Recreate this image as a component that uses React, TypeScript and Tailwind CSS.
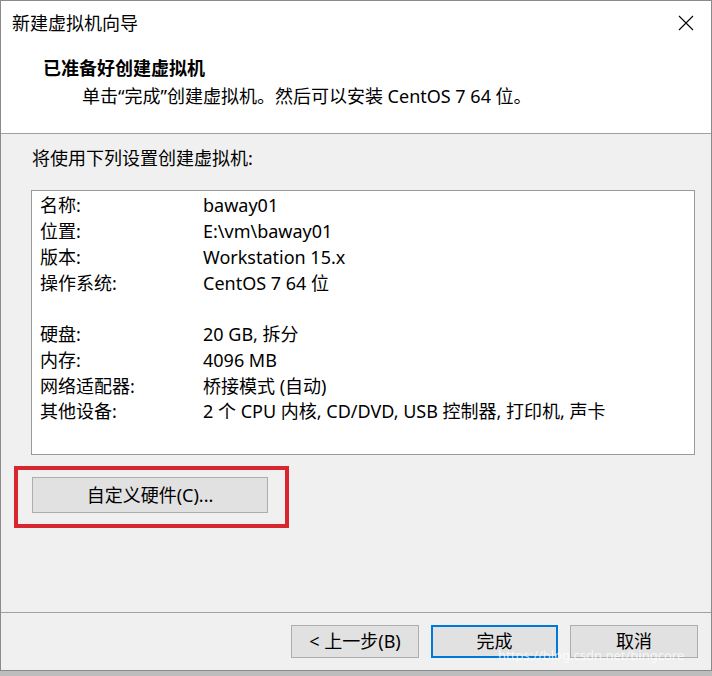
import React from "react";

const font = "font-['Noto_Sans','Noto_Sans_CJK_SC',sans-serif]";

// Summary rows; null marks the blank spacer row between OS and hardware.
const ROWS: ([string, string] | null)[] = [
  ["名称:", "baway01"],
  ["位置:", "E:\\vm\\baway01"],
  ["版本:", "Workstation 15.x"],
  ["操作系统:", "CentOS 7 64 位"],
  null,
  ["硬盘:", "20 GB, 拆分"],
  ["内存:", "4096 MB"],
  ["网络适配器:", "桥接模式 (自动)"],
  ["其他设备:", "2 个 CPU 内核, CD/DVD, USB 控制器, 打印机, 声卡"],
];

function WinButton({ children, primary }: { children: React.ReactNode; primary?: boolean }) {
  return (
    <button
      className={
        primary
          ? "flex h-[33px] w-[127px] items-center justify-center border-2 border-[#0078d7] bg-[#e1e1e1] text-[18px] text-black"
          : "flex h-[33px] w-[128px] items-center justify-center border border-[#adadad] bg-[#e1e1e1] text-[18px] text-black"
      }
    >
      {children}
    </button>
  );
}

export default function App() {
  return (
    <div className={`relative h-[676px] w-[712px] overflow-hidden bg-[#bdbdbd] ${font}`}>
      <div className="flex h-[671px] w-[712px] flex-col border border-[#8a8a8a] bg-[#f0f0f0]">
        {/* white header */}
        <div className="h-[133px] shrink-0 border-b border-[#a0a0a0] bg-white">
          <div className="flex h-[43px] items-center justify-between pl-[11px] pr-[17px]">
            <span className="text-[18px] leading-[26px] text-black">新建虚拟机向导</span>
            <svg width="16" height="16" viewBox="0 0 16 16" className="text-black">
              <path d="M1 1 L15 15 M15 1 L1 15" stroke="currentColor" strokeWidth="1.1" fill="none" />
            </svg>
          </div>
          <div className="mt-[11px] pl-[42px] text-[18px] font-bold leading-[26px] text-black">
            已准备好创建虚拟机
          </div>
          <div className="mt-[2px] pl-[81px] text-[18px] leading-[26px] text-black">
            单击“完成”创建虚拟机。然后可以安装 CentOS 7 64 位。
          </div>
        </div>

        {/* body */}
        <div className="flex flex-1 flex-col">
          <div className="mt-[11px] pl-[31px] text-[18px] leading-[26px] text-black">
            将使用下列设置创建虚拟机:
          </div>
          <div className="ml-[30px] mt-[19px] h-[265px] w-[664px] border border-[#9a9a9a] bg-white pl-[8px] pt-[2px]">
            {ROWS.map((r, i) =>
              r ? (
                <div key={i} className="flex h-[25.75px] items-center text-[18px] text-black">
                  <span className="w-[163px] shrink-0">{r[0]}</span>
                  <span>{r[1]}</span>
                </div>
              ) : (
                <div key={i} className="h-[25.75px]" />
              )
            )}
          </div>
          <div className="ml-[13px] mt-[11px] h-[62px] w-[275px] border-4 border-[#d7262e] pl-[14px] pt-[7px]">
            <button className="flex h-[36px] w-[236px] items-center justify-center border border-[#adadad] bg-[#e1e1e1] text-[18px] text-black">
              自定义硬件(C)...
            </button>
          </div>
        </div>

        {/* footer */}
        <div className="flex h-[58px] shrink-0 items-start justify-end gap-[12px] border-t border-[#a0a0a0] pr-[13px] pt-[12px]">
          <WinButton>&lt; 上一步(B)</WinButton>
          <WinButton primary>完成</WinButton>
          <WinButton>取消</WinButton>
        </div>
      </div>

      {/* blog watermark over the bottom-right corner */}
      <span className="absolute left-[498px] top-[647px] text-[13px] leading-[16px] text-white/75">
        https://blog.csdn.net/bingcore
      </span>
    </div>
  );
}
